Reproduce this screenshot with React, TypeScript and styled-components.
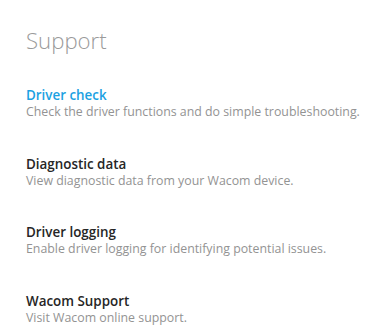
import styled, { createGlobalStyle } from 'styled-components';

const GlobalStyle = createGlobalStyle`
  html, body {
    margin: 0;
    padding: 0;
    background: #ffffff;
  }
  body {
    font-family: "Open Sans", "Noto Sans", "Liberation Sans", sans-serif;
  }
`;

const Page = styled.main`
  padding: 26px 0 0 26px;
  width: 385px;
  height: 335px;
  box-sizing: border-box;
  overflow: hidden;
`;

const Heading = styled.h1`
  margin: 0 0 30px;
  font-size: 22.2px;
  font-weight: 300;
  line-height: 30px;
  color: #9a9a9a;
`;

const List = styled.ul`
  list-style: none;
  margin: 0;
  padding: 0;
  display: flex;
  flex-direction: column;
  gap: 34.7px;
`;

const Item = styled.li`
  display: flex;
  flex-direction: column;
`;

const ItemTitle = styled.a<{ $active?: boolean }>`
  display: block;
  font-size: 13.4px;
  font-weight: 600;
  line-height: 18px;
  color: ${({ $active }) => ($active ? '#1ba1e2' : '#262626')};
  text-decoration: none;
  cursor: pointer;
`;

const ItemText = styled.p`
  margin: 0;
  font-size: 12.35px;
  line-height: 16px;
  color: #939393;
`;

const items = [
  { title: 'Driver check', text: 'Check the driver functions and do simple troubleshooting.', active: true },
  { title: 'Diagnostic data', text: 'View diagnostic data from your Wacom device.' },
  { title: 'Driver logging', text: 'Enable driver logging for identifying potential issues.' },
  { title: 'Wacom Support', text: 'Visit Wacom online support.' },
];

export default function App() {
  return (
    <>
      <GlobalStyle />
      <Page>
        <Heading>Support</Heading>
        <List>
          {items.map((item) => (
            <Item key={item.title}>
              <ItemTitle $active={item.active}>{item.title}</ItemTitle>
              <ItemText>{item.text}</ItemText>
            </Item>
          ))}
        </List>
      </Page>
    </>
  );
}
